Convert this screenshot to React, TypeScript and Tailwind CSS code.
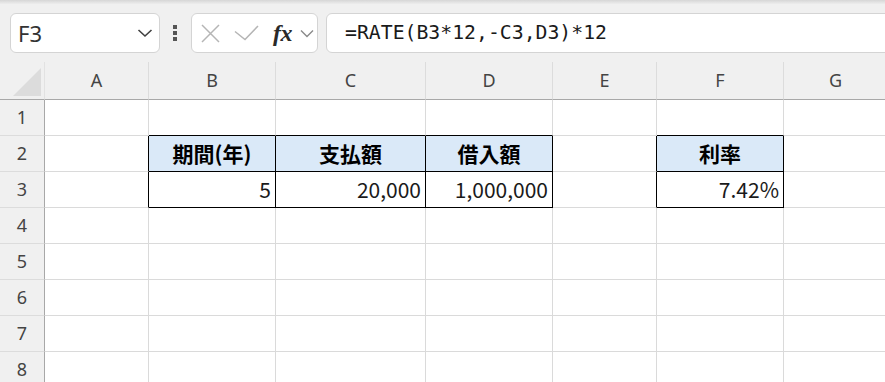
import React from 'react';

const COLS = ['A', 'B', 'C', 'D', 'E', 'F', 'G'];
const ROWS = [1, 2, 3, 4, 5, 6, 7, 8];

// cell contents keyed by "row-col"
const CELLS: Record<string, { text: string; head?: boolean }> = {
  '2-1': { text: '期間(年)', head: true },
  '2-2': { text: '支払額', head: true },
  '2-3': { text: '借入額', head: true },
  '2-5': { text: '利率', head: true },
  '3-1': { text: '5' },
  '3-2': { text: '20,000' },
  '3-3': { text: '1,000,000' },
  '3-5': { text: '7.42%' },
};

function inTable(r: number, c: number) {
  return (r === 2 || r === 3) && ((c >= 1 && c <= 3) || c === 5);
}

const uiFont = "font-['Noto_Sans','Liberation_Sans',sans-serif]";
const cellFont = "font-['Noto_Sans_CJK_JP','Noto_Sans',sans-serif]";

function NameBox() {
  return (
    <div className="shrink-0 ml-[10px] w-[150px] h-[40px] bg-white border border-[#d4d4d4] rounded-[6px] flex items-center justify-between pl-[7px] pr-[6px]">
      <span className={`${uiFont} text-[22px] text-[#333] leading-none`}>F3</span>
      <svg width="16" height="10" viewBox="0 0 16 10">
        <polyline points="1.5,2 8,8 14.5,2" fill="none" stroke="#404040" strokeWidth="1.6" />
      </svg>
    </div>
  );
}

function FormulaButtons() {
  return (
    <div className="shrink-0 w-[127px] h-[40px] bg-white border border-[#d4d4d4] rounded-[6px] flex items-center">
      <svg className="ml-[9px]" width="19" height="19" viewBox="0 0 19 19">
        <path d="M1 1 L18 18 M18 1 L1 18" stroke="#b5b5b5" strokeWidth="1.5" />
      </svg>
      <svg className="ml-[14px]" width="25" height="16" viewBox="0 0 25 16">
        <polyline points="1,6.5 11,14.5 24,1" fill="none" stroke="#b5b5b5" strokeWidth="1.5" />
      </svg>
      <span className="ml-[14px] font-['Liberation_Serif',serif] italic font-bold text-[24px] text-[#2a2a2a] leading-none tracking-[-0.5px]">fx</span>
      <svg className="ml-[8px]" width="14" height="9" viewBox="0 0 14 9">
        <polyline points="1,1.5 7,7.5 13,1.5" fill="none" stroke="#8a8a8a" strokeWidth="1.4" />
      </svg>
    </div>
  );
}

export default function App() {
  return (
    <div className="w-[885px] h-[382px] overflow-hidden bg-[#f0f0f0]">
      <div className="h-[4px] bg-gradient-to-b from-[#d6d6d6] to-[#ededed]" />
      <div className="h-[58px] flex items-start pt-[9px] overflow-hidden">
        <NameBox />
        <div className="shrink-0 w-[31px] flex justify-center">
          <div className="flex flex-col gap-[2px] mt-[12px] mr-[2px]">
            <div className="w-[4px] h-[4px] bg-[#555]" />
            <div className="w-[4px] h-[4px] bg-[#555]" />
            <div className="w-[4px] h-[4px] bg-[#555]" />
          </div>
        </div>
        <FormulaButtons />
        <div className="shrink-0 ml-[8px] w-[600px] h-[40px] bg-white border border-[#d4d4d4] rounded-[6px] flex items-center pl-[18px]">
          <span className="font-['DejaVu_Sans_Mono','Liberation_Mono',monospace] text-[19.8px] text-[#1a1a1a] leading-none">
            =RATE(B3*12,-C3,D3)*12
          </span>
        </div>
      </div>

      <div className="grid grid-cols-[45px_104px_127px_150px_127px_104px_127px_104px] grid-rows-[38px_repeat(8,36px)] bg-white">
        {/* corner */}
        <div className="bg-[#f0f0f0] border-r border-b border-r-[#e2e2e2] border-b-[#a8a8a8] flex items-end justify-end pr-[3px] pb-[3px]">
          <svg width="28" height="28" viewBox="0 0 28 28">
            <polygon points="0,28 28,28 28,0" fill="#dcdcdc" />
          </svg>
        </div>
        {COLS.map((c) => (
          <div
            key={c}
            className={`bg-[#f0f0f0] border-r border-b border-r-[#dcdcdc] border-b-[#a8a8a8] flex items-center justify-center ${uiFont} text-[18px] text-[#444]`}
          >
            {c}
          </div>
        ))}

        {ROWS.map((r) => (
          <React.Fragment key={r}>
            <div className={`bg-[#f0f0f0] border-r border-b border-r-[#a8a8a8] border-b-[#dcdcdc] flex items-center justify-center ${uiFont} text-[18px] text-[#444]`}>
              {r}
            </div>
            {COLS.map((_, c) => {
              const cell = CELLS[`${r}-${c}`];
              const rightBlack = inTable(r, c) || inTable(r, c + 1);
              const bottomBlack = inTable(r, c) || inTable(r + 1, c);
              return (
                <div
                  key={c}
                  className={[
                    'border-r border-b flex items-center',
                    rightBlack ? 'border-r-black' : 'border-r-[#dadada]',
                    bottomBlack ? 'border-b-black' : 'border-b-[#dadada]',
                    cell?.head ? 'bg-[#dae9f8] justify-center font-bold text-black' : 'justify-end pr-[4px] text-[#1a1a1a]',
                    cellFont,
                    'text-[21px] leading-none',
                  ].join(' ')}
                >
                  {cell?.text}
                </div>
              );
            })}
          </React.Fragment>
        ))}
      </div>
    </div>
  );
}
